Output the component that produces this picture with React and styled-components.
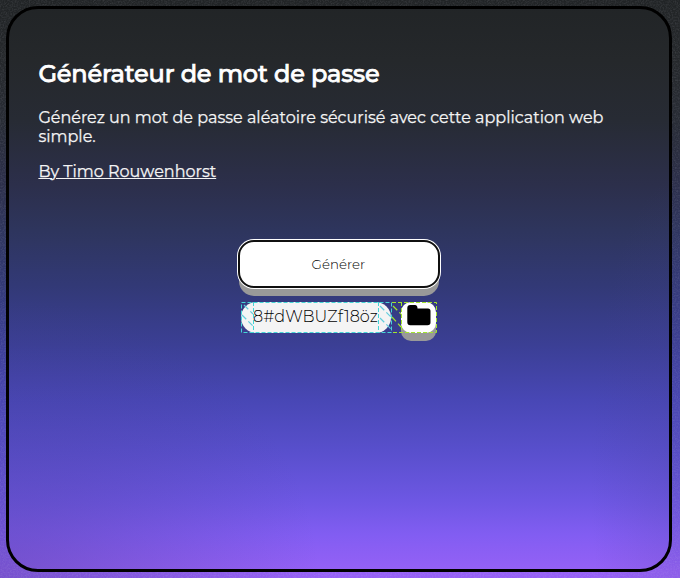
import React from "react";
import styled, { createGlobalStyle } from "styled-components";

const GlobalStyle = createGlobalStyle`
  * { box-sizing: border-box; }
  body { margin: 0; font-family: Montserrat, Inter, sans-serif; color: #f4f4f4; }
`;

const sky = `
  radial-gradient(ellipse 320px 280px at 0 100%, rgba(75, 60, 150, 0.42), transparent),
  radial-gradient(ellipse 90px 300px at 100% 82%, rgba(75, 65, 150, 0.2), transparent),
  linear-gradient(#212426 0, #25282b 60px, #272b34 120px, #2c2f4b 185px, #2e355d 230px,
    #323976 285px, #3b3f95 345px, #4847b5 400px, #584fcc 450px, #6d57e3 500px, #825df2 535px, #9661f6 572px)`;

const Page = styled.main`
  width: 680px;
  height: 578px;
  padding: 6px 8px 6px 6px;
  overflow: hidden;
  position: relative;
  isolation: isolate;
  background: ${sky};
`;

const Grain = styled.svg`
  position: absolute;
  inset: 0;
  z-index: -1;
  opacity: 0.13;
`;

const Card = styled.section`
  width: 666px;
  height: 566px;
  border: 3px solid #000;
  border-radius: 32px;
  padding: 50px 29px 0 29.4px;
  background: ${sky};
  background-size: 680px 578px;
  background-position: -9px -9px;
`;

const Title = styled.h1`
  margin: 0;
  font-size: 24px;
  line-height: 30px;
  font-weight: 500;
  letter-spacing: -0.17px;
  -webkit-text-stroke: 0.75px #fff;
  white-space: nowrap;
  color: #fff;
`;

const Intro = styled.p`
  margin: 19px 0 16px;
  font-size: 16px;
  line-height: 19px;
  font-weight: 400;
  -webkit-text-stroke: 0.25px #f4f4f4;
`;

const Author = styled.a`
  display: block;
  width: max-content;
  font-size: 16px;
  line-height: 19px;
  font-weight: 400;
  -webkit-text-stroke: 0.25px #f4f4f4;
  color: inherit;
  text-decoration: underline;
  text-decoration-thickness: 1px;
  text-underline-offset: 1px;
`;

const Controls = styled.div`
  display: flex;
  flex-direction: column;
  align-items: center;
  width: 602px;
  margin: 59px 0 0 -0.4px;
  gap: 14px;
`;

const GenerateButton = styled.button`
  width: 202px;
  height: 48px;
  padding: 0 1px 0 0;
  border: 2px solid #101010;
  border-radius: 16px;
  background: #fff;
  box-shadow: 0 0 0 1px #fff, 0 9px 0 -1px #999;
  font: 300 13.333px Montserrat, Inter, sans-serif;
  letter-spacing: 0.05px;
  color: #000;
`;

const ResultRow = styled.div`
  display: flex;
  width: 196px;
  height: 31px;
`;

const Password = styled.div`
  width: 150px;
  padding: 0 12px;
  border-radius: 16px;
  background: #f4f4f4;
  font-size: 16px;
  line-height: 30px;
  font-weight: 300;
  letter-spacing: 0.06px;
  color: #000;
  white-space: nowrap;
`;

const CopyButton = styled.button`
  display: flex;
  justify-content: center;
  width: 35px;
  height: 31px;
  margin-left: 10px;
  padding: 3px 0 0;
  border: 0;
  border-radius: 10px;
  background: #fff;
  box-shadow: 0 8px #999;
`;

const ResultFrame = styled.div`
  position: relative;
`;

const Guides = styled.svg`
  position: absolute;
  inset: 0;
  pointer-events: none;
`;

export default function App() {
  return (
    <>
      <GlobalStyle />
      <Page>
        <Grain width="680" height="578" aria-hidden="true">
          <filter id="grain">
            <feTurbulence type="fractalNoise" baseFrequency="0.65" numOctaves="2" />
            <feColorMatrix values="0 0 0 0 .75  0 0 0 0 .75  0 0 0 0 .85  1.8 0 0 0 -.7" />
          </filter>
          <rect width="680" height="578" filter="url(#grain)" />
        </Grain>
        <Card>
          <Title>Générateur de mot de passe</Title>
          <Intro>
            Générez un mot de passe aléatoire sécurisé avec cette application web
            <br />
            simple.
          </Intro>
          <Author>By Timo Rouwenhorst</Author>
          <Controls>
            <GenerateButton>Générer</GenerateButton>
            <ResultFrame>
              <ResultRow>
                <Password>8#dWBUZf18öz</Password>
                <CopyButton aria-label="Copier">
                  <svg width="24" height="21" viewBox="0 0 24 21">
                    <path d="M.3 3Q.3 0 3.300 0H8Q10.500 0 10.500 3.500H21Q23.500 3.500 23.500 6V17.500Q23.500 20.300 20.500 20.300H3.300Q.3 20.300 .3 17.300Z" />
                  </svg>
                </CopyButton>
              </ResultRow>
              <Guides width="196" height="31" fill="none" aria-hidden="true">
                <g stroke="#45d5d6" strokeDasharray="4 2">
                  <path d="M.5.5H150.500V30.500H.5Z M12.500 0V31M137.500 0V31" />
                </g>
                <path
                  d="M3 3l9 9M1 13l11 11M139 4l11 11M139 16l11 11"
                  stroke="#62cddc"
                  strokeWidth="1.2"
                  strokeDasharray="6 3"
                />
                <g stroke="#a2e62c" strokeDasharray="4 2">
                  <path d="M151 .5H195.500V30.500H151M160.500 0V31" />
                  <path d="M152 4l8 8M151 15l9 10" strokeDasharray="6 3" strokeWidth="1.2" />
                </g>
              </Guides>
            </ResultFrame>
          </Controls>
        </Card>
      </Page>
    </>
  );
}
